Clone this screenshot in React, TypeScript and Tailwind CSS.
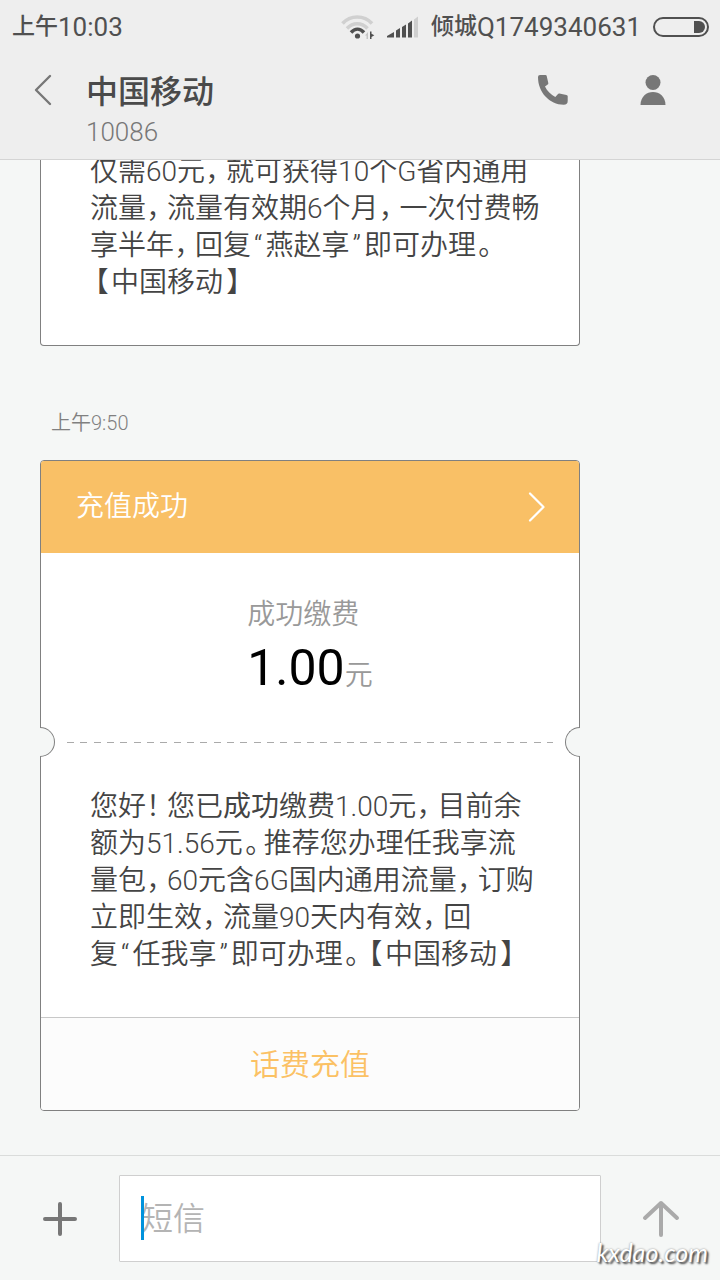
import { Children } from 'react'
import type { ReactNode } from 'react'

const linhasPacote = [
  '仅需60元，就可获得10个G省内通用',
  '流量，流量有效期6个月，一次付费畅',
  '享半年，回复“燕赵享”即可办理。',
  '【中国移动】',
]

function BarraStatus() {
  return (
    <div className="flex h-[53px] items-center justify-between pr-[11px] pl-3 text-[#505050]">
      <div className="flex items-center leading-8">
        <span className="text-[23px] font-medium">上午</span>
        <span className="text-[26px]">10:03</span>
      </div>
      <div className="flex items-center">
        <svg className="mr-3" width="34" height="26" viewBox="0 0 34 26" fill="none">
          <path d="M1.5 9.5C9.5 .8 23 .8 31 9.5" stroke="#d0d0d0" strokeWidth="3.6" />
          <path d="M6 14.5C12 8.2 20.5 8.2 26.5 14.5" stroke="#d0d0d0" strokeWidth="3.6" />
          <path d="M10 18.5C14 14 19 14 23 18.5" stroke="#505050" strokeWidth="3.4" />
          <circle cx="16.5" cy="22" r="2.6" fill="#505050" />
          <path d="M24 21.5 27 18v7h-1.5v-3.5z" fill="#c4c4c4" />
          <path d="M29 17.5h1.5v2.2l2.8 1.6-2.8 1.6V25H29z" fill="#505050" />
        </svg>
        <svg className="mr-3" width="32" height="22" viewBox="0 0 32 22" fill="#505050">
          <path d="M0 21.5v-1.5l7-4v5.5z" />
          <path d="M9 14.5l4-2.5v9.5H9z" />
          <path d="M15 11l4-2.5v13h-4z" />
          <path d="M21 7.5l4-3v17h-4z" />
          <path d="M27 3.5l4-3v21h-4z" fill="#cfcfcf" />
        </svg>
        <span className="text-[23px] leading-8 font-medium">倾城</span>
        <span className="mr-3 text-[26px] leading-8">Q1749340631</span>
        <div className="flex h-5 w-14 items-center justify-end rounded-full border-2 border-[#505050] pr-0.5">
          <div className="h-3 w-[11px] rounded-r-full bg-[#505050]" />
        </div>
      </div>
    </div>
  )
}

function Cabecalho() {
  return (
    <header className="shrink-0 border-b border-[#d4d4d4] bg-[#eeeeee]">
      <BarraStatus />
      <div className="flex h-[106px] items-start pl-8">
        <button type="button" aria-label="返回" className="mt-[21px]">
          <svg width="22" height="32" viewBox="0 0 22 32" fill="none" stroke="#777" strokeWidth="2.4" strokeLinecap="round" strokeLinejoin="round">
            <path d="M18 2 4 16l14 14" />
          </svg>
        </button>
        <div className="ml-8 flex-1">
          <h1 className="mt-[19px] text-[32px] leading-10 font-medium text-[#4a4a4a]">中国移动</h1>
          <p className="mt-1 text-[26px] leading-8 font-light text-[#777]">10086</p>
        </div>
        <button type="button" aria-label="拨打电话" className="mt-[21px] mr-[71px]">
          <svg width="32" height="32" viewBox="0 0 32 32" fill="#777">
            <path d="M3 1h5.5q1 0 1.2 1L11.300 9q.2 1-.6 1.500L8 12.600C10 17 14 21 18.300 23l2.500-2.800q.6-.8 1.600-.6l7 1.300q1.300.2 1.300 1.200V27q0 3.800-4 3.800C12.500 30.500 1 18.500 1 3q0-2 2-2z" />
          </svg>
        </button>
        <button type="button" aria-label="联系人" className="mt-[21px] mr-[54px]">
          <svg width="26" height="32" viewBox="0 0 26 32" fill="#777">
            <circle cx="13" cy="8.5" r="7.5" />
            <path d="M.5 31C.5 13.500 25.500 13.500 25.500 31z" />
          </svg>
        </button>
      </div>
    </header>
  )
}

const espacos: Record<string, string> = {
  '，': 'ml-0.5 mr-[5px]',
  '。': 'ml-0.5 mr-[5px]',
  '！': 'mr-[7px]',
  '【': 'ml-1 mr-[3px]',
  '】': 'ml-1',
  '“': 'mx-[3px]',
  '”': 'mx-[3px]',
}

// pontuação proporcional, com um respiro próprio para cada sinal
function pontuar(texto: string) {
  return texto.split(/([，。！【】“”])/).map((parte, i) =>
    espacos[parte] ? <span key={i} className={espacos[parte]}>{parte}</span> : parte,
  )
}

function Texto({ children }: { children: ReactNode }) {
  return (
    <p className="px-[49px] text-[28px] leading-[37px] font-[350] whitespace-nowrap text-[#444] [font-feature-settings:'palt']">
      {Children.map(children, (filho) => (typeof filho === 'string' ? pontuar(filho) : filho))}
    </p>
  )
}

function Recorte() {
  return (
    <div className="relative flex h-[30px] items-center px-[26px]">
      <div className="absolute top-0 -left-px h-[30px] w-[15px] rounded-r-full border border-l-0 border-[#808080] bg-[#f5f7f6]" />
      <svg className="h-px w-full">
        <line x1="0" y1="0.5" x2="100%" y2="0.5" stroke="#aaa" strokeDasharray="7 6 7 7 7 6" />
      </svg>
      <div className="absolute top-0 -right-px h-[30px] w-[15px] rounded-l-full border border-r-0 border-[#808080] bg-[#f5f7f6]" />
    </div>
  )
}

function CartaoRecarga() {
  return (
    <section className="rounded border border-[#808080] bg-white">
      <a href="#detalhes" className="flex h-[92px] items-center justify-between rounded-t-[3px] bg-[#f9c066] pr-[33px] pl-[35px] text-[28px] font-[350] text-white">
        充值成功
        <svg width="18" height="30" viewBox="0 0 18 30" fill="none" stroke="#fff" strokeWidth="2.2" strokeLinecap="round" strokeLinejoin="round">
          <path d="M2 1.5 15.5 15 2 28.5" />
        </svg>
      </a>
      <div className="flex justify-center pt-11 pb-6">
        <div>
          <p className="text-[28px] leading-9 font-[350] text-[#999]">成功缴费</p>
          <p className="flex items-baseline">
            <span className="text-[50px] leading-[70px] text-black">1.00</span>
            <span className="text-[28px] leading-9 font-[350] text-[#999]">元</span>
          </p>
        </div>
      </div>
      <Recorte />
      <div className="pt-[31px] pb-11">
        <Texto>
          您好！您已<span className="font-normal">成功</span>缴费1.00元，目前余
          <br />
          额为51.56元。推荐您办理任我享流
          <br />
          量包，60元含6G国内通用流量，订购
          <br />
          立即生效，流量90天内有效，回
          <br />
          复“任我享”即可办理。【中国移动】
        </Texto>
      </div>
      <button type="button" className="h-[93px] w-full rounded-b-[3px] border-t border-[#c8c8c8] bg-[#fcfcfc] text-[30px] font-[350] text-[#fbc164]">
        话费充值
      </button>
    </section>
  )
}

function BarraMensagem() {
  return (
    <footer className="flex shrink-0 items-center border-t border-[#dadcdb] pt-[19px] pb-[18px]">
      <button type="button" aria-label="添加" className="ml-[42px]">
        <svg width="36" height="36" viewBox="0 0 36 36" stroke="#777" strokeWidth="4" strokeLinecap="round">
          <path d="M18 3v30M3 18h30" />
        </svg>
      </button>
      <div className="relative ml-[41px] flex-1">
        <input
          type="text"
          aria-label="短信"
          placeholder="短信"
          className="block h-[87px] w-full rounded-[1px] border border-[#cfcfcf] bg-white px-[21px] text-[32px] font-[350] outline-none placeholder:text-[#b4b4b4]"
        />
        <span className="absolute top-[21px] left-[22px] h-11 w-[3px] bg-[#0092dc]" />
      </div>
      <button type="button" aria-label="发送" className="mr-10 ml-[41px]">
        <svg width="38" height="38" viewBox="0 0 38 38" fill="none" stroke="#aaa" strokeWidth="4" strokeLinecap="round" strokeLinejoin="round">
          <path d="M19 35V3M3 18 19 3l16 15" />
        </svg>
      </button>
    </footer>
  )
}

export default function App() {
  return (
    <div className="relative flex h-screen flex-col overflow-hidden bg-[#f5f7f6] font-[Roboto,'Noto_Sans_CJK_SC',sans-serif]">
      <Cabecalho />
      <main className="flex min-h-0 flex-1 flex-col justify-end overflow-hidden pb-11">
        <div className="ml-10 flex w-3/4 shrink-0 flex-col">
          <section className="rounded-b border border-t-0 border-[#808080] bg-white pb-11">
            <Texto>
              {linhasPacote.map((linha) => (
                <span key={linha} className="block">{pontuar(linha)}</span>
              ))}
            </Texto>
          </section>
          <time className="mt-[65px] mb-[25px] ml-[11px] text-[20px] leading-6 font-[350] text-[#808080]">上午9:50</time>
          <CartaoRecarga />
        </div>
      </main>
      <BarraMensagem />
      <span className="absolute right-3 bottom-3 text-[25px] leading-8 text-white italic [font-family:Lato,sans-serif] [text-shadow:2px_2px_2px_#444,0_0_2px_#888]">
        kxdao.com
      </span>
    </div>
  )
}
